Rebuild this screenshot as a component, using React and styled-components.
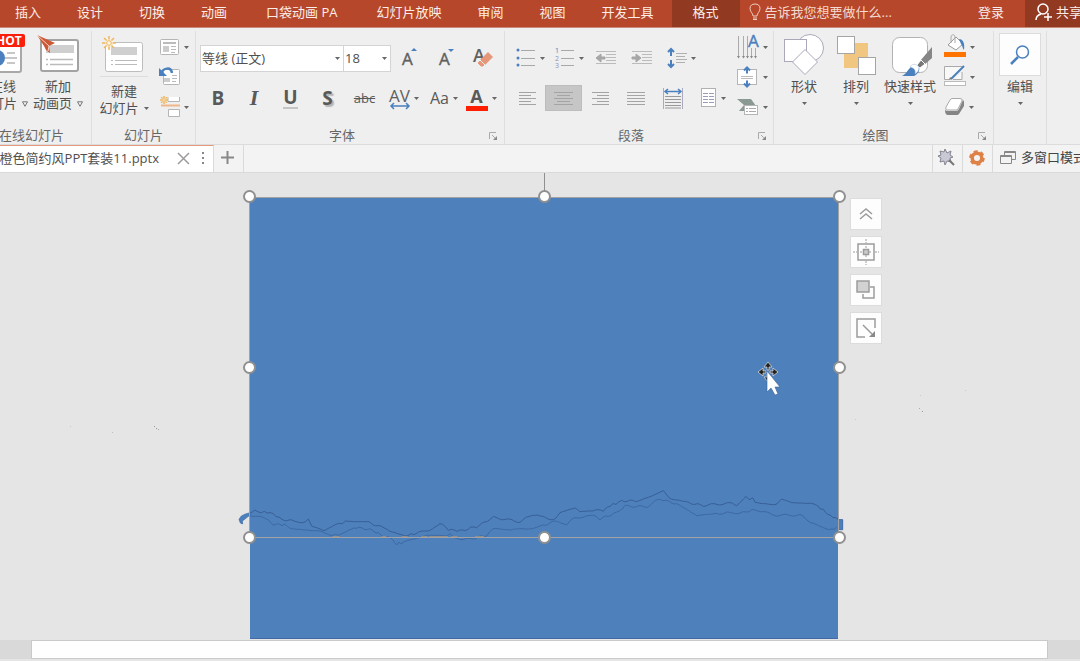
import React from 'react';
import styled, { createGlobalStyle } from 'styled-components';

const GlobalStyle = createGlobalStyle`
  * {
    box-sizing: border-box;
  }

  body {
    margin: 0;
    overflow: hidden;
    font-family: 'Open Sans', 'Noto Sans CJK SC', sans-serif;
    font-size: 13px;
    line-height: 17px;
    color: #505050;
  }

  button,
  input,
  select {
    margin: 0;
    padding: 0;
    border: 0;
    border-radius: 0;
    background: none;
    font: inherit;
    color: inherit;
  }

  svg {
    display: block;
    flex: none;
    overflow: visible;
  }
`;

const Root = styled.div`
  display: flex;
  flex-direction: column;
  height: 100vh;
  overflow: hidden;
  background: #e5e5e5;
`;

/* menu bar */

const MenuBar = styled.header`
  display: flex;
  flex: none;
  height: 28px;
  overflow: hidden;
  background: #b7472a;
  color: #fbeee9;
  border-bottom: 1px solid #c98a79;
`;

const MenuNav = styled.nav`
  display: flex;
  margin-left: -3px;
`;

const MenuItem = styled.button`
  flex: none;
  padding: 0 ${props => (props.$wide ? 21 : 18)}px 3px;
  background: ${props => (props.$active ? '#923922' : 'transparent')};
  white-space: nowrap;
`;

const TellMe = styled.label`
  display: flex;
  flex: 1;
  align-items: center;
  gap: 4px;
  padding: 0 0 3px 9px;
`;

const TellMeInput = styled.input`
  flex: 1;
  min-width: 0;
  outline: none;

  &::placeholder {
    color: #f3d9cf;
    opacity: 1;
  }
`;

const SignIn = styled.button`
  flex: none;
  padding: 0 21px 3px;
`;

const Share = styled.button`
  display: flex;
  flex: none;
  align-items: center;
  gap: 4px;
  width: 67px;
  margin-right: -12px;
  padding: 0 0 3px 10px;
  background: #923922;
  white-space: nowrap;
`;

/* ribbon */

const Ribbon = styled.div`
  display: flex;
  flex: none;
  height: 117px;
  padding-top: 3px;
  overflow: hidden;
  background: #efefef;
  border-bottom: 1px solid #dcdcdc;
`;

const Group = styled.section`
  display: flex;
  flex: none;
  flex-direction: column;
  width: ${props => props.$width}px;
  margin-left: ${props => (props.$clipped ? -28 : 0)}px;
  border-right: 1px solid #dedede;
`;

const GroupBody = styled.div`
  display: flex;
  flex: 1;
  padding: 0 4px;
`;

const GroupFooter = styled.footer`
  display: grid;
  grid-template-columns: 1fr ${props => (props.$launcher ? '16px' : '')};
  align-items: center;
  height: 18px;
  color: #666;
  text-align: center;
  white-space: nowrap;
`;

const Rows = styled.div`
  display: flex;
  flex: 1;
  flex-direction: column;
  gap: 14px;
  padding-top: 14px;
`;

const Row = styled.div`
  display: flex;
  align-items: center;
  height: 26px;
`;

const SmallColumn = styled.div`
  display: flex;
  flex: none;
  flex-direction: column;
  gap: 2px;
  padding-top: 2px;
  margin-left: ${props => props.$offset || 0}px;
`;

const ToolButton = styled.button`
  display: flex;
  flex: none;
  align-items: center;
  justify-content: ${props => (props.$start ? 'flex-start' : 'center')};
  gap: 4px;
  width: ${props => props.$width || 37}px;
  height: ${props => props.$height || 26}px;
  background: ${props => (props.$active ? '#c6c6c6' : 'transparent')};
  outline: ${props => (props.$active ? '1px solid #bdbdbd' : 'none')};
  outline-offset: -1px;
`;

const BigButton = styled.button`
  display: flex;
  flex: none;
  flex-direction: column;
  align-items: center;
  width: ${props => props.$width || 56}px;
  height: 86px;
  padding-top: 2px;
  white-space: nowrap;
`;

const BigIcon = styled.span`
  display: flex;
  align-items: center;
  justify-content: center;
  width: ${props => (props.$boxed ? '42px' : 'auto')};
  height: 43px;
  margin-bottom: 2px;
  background: ${props => (props.$boxed ? '#fdfdfd' : 'transparent')};
  border: ${props => (props.$boxed ? '1px solid #dcdcdc' : '0')};
`;

const Line = styled.span`
  display: flex;
  align-items: center;
  gap: 5px;
  height: 17px;
`;

const SplitRule = styled.span`
  width: 48px;
  height: 7px;
  border-top: 1px solid #dcdcdc;
`;

const Combo = styled.span`
  display: flex;
  align-items: center;
  width: ${props => props.$width}px;
  height: 27px;
  margin-right: -1px;
  padding-right: 3px;
  background: #fff;
  border: 1px solid #d4d4d4;
`;

const ComboSelect = styled.select`
  flex: 1;
  min-width: 0;
  padding-left: 1px;
  appearance: none;
  outline: none;
`;

const Glyph = styled.span`
  font-family: ${props => (props.$serif ? "'Liberation Serif', serif" : "'Open Sans', sans-serif")};
  font-size: ${props => props.$size || 19}px;
  font-weight: ${props => (props.$bold ? 700 : 400)};
  font-style: ${props => (props.$italic ? 'italic' : 'normal')};
  line-height: 20px;
  color: #595959;
  text-decoration: ${props => (props.$strike ? 'line-through' : 'none')};
  text-shadow: ${props => (props.$shadow ? '2px 2px 1px #b4b4b4' : 'none')};
  border-bottom: ${props => (props.$underline ? '2px solid #c4c4c4' : '0')};
`;

const Stack = styled.span`
  display: flex;
  flex-direction: column;
  align-items: center;
`;

const ColorBar = styled.span`
  width: 22px;
  height: 5px;
  background: ${props => props.$color};
`;

/* document tabs */

const TabStrip = styled.div`
  display: flex;
  flex: none;
  height: 28px;
  overflow: hidden;
  background: #f3f3f3;
  border-bottom: 1px solid #dadada;
`;

const DocTab = styled.div`
  display: flex;
  flex: none;
  align-items: center;
  justify-content: flex-end;
  gap: 13px;
  width: 214px;
  padding: 0 8px 2px 0;
  background: #fff;
  border-top: 1px solid #e59a7c;
  border-right: 1px solid #dadada;
  white-space: nowrap;
`;

const DocName = styled.span`
  margin-right: 6px;
`;

const StripButton = styled.button`
  display: flex;
  flex: none;
  align-items: center;
  justify-content: center;
  width: 30px;
  padding: 0 2px 2px 0;
  border-right: 1px solid #dadada;
`;

const StripTools = styled.div`
  display: flex;
  flex: none;
  margin-left: auto;
  border-left: 1px solid #dadada;
`;

const WindowMode = styled.button`
  display: flex;
  align-items: center;
  gap: 5px;
  width: 87px;
  padding: 0 0 2px 7px;
  color: #444;
  overflow: hidden;
  white-space: nowrap;
`;

/* canvas */

const Canvas = styled.main`
  position: relative;
  display: flex;
  flex: 1;
  justify-content: center;
  min-height: 0;
  padding: 24px 0 1px 8px;
  overflow: hidden;
`;

const Slide = styled.div`
  position: relative;
  width: 588px;
  background: #4e80bc;
  border-bottom: 1px solid #4169a6;
`;

const Selection = styled.div`
  position: absolute;
  top: 0;
  left: -1px;
  width: 590px;
  height: 341px;
  outline: 1px solid #a2a2a2;
  outline-offset: -1px;
`;

const RotateStem = styled.div`
  position: absolute;
  top: -24px;
  left: 50%;
  width: 1px;
  height: 24px;
  background: #8f8f8f;
`;

const Handle = styled.span`
  position: absolute;
  left: ${props => props.$x}%;
  top: ${props => props.$y}%;
  width: 13px;
  height: 13px;
  margin: -7px 0 0 -6px;
  background: #fff;
  border: 2px solid #909090;
  border-radius: 50%;
`;

const Overlay = styled.svg`
  position: absolute;
  left: ${props => props.$left}px;
  top: ${props => props.$top}px;
`;

const FloatBar = styled.div`
  position: absolute;
  top: 1px;
  left: 600px;
  display: flex;
  flex-direction: column;
  gap: 6px;
`;

const FloatButton = styled.button`
  display: flex;
  align-items: center;
  justify-content: center;
  width: 32px;
  height: 32px;
  background: #fdfdfd;
  outline: 1px solid #dcdcdc;
  outline-offset: -1px;
`;

const Speck = styled.span`
  position: absolute;
  left: ${props => props.$x}px;
  top: ${props => props.$y}px;
  width: 1px;
  height: 1px;
  background: ${props => props.$color || '#c9c9c9'};
`;

const ScrollTrack = styled.div`
  flex: none;
  height: 21px;
  padding: 0 32px 2px 31px;
  background: #d9d9d9;
  border-bottom: 2px solid #e5e5e5;
`;

const ScrollThumb = styled.div`
  height: 19px;
  background: #fefefe;
  border: 1px solid #c9c9c9;
`;

const BLUE = '#4a80bd';
const GRAY = '#9c9c9c';

const Caret = () => (
  <svg width="5" height="3" viewBox="0 0 5 3">
    <path d="M0 0h5L2.500 3z" fill="#666" />
  </svg>
);

const HollowCaret = () => (
  <svg width="6" height="6" viewBox="0 0 6 6">
    <path d="M.5 .8h5L3 5.300z" fill="none" stroke="#777" />
  </svg>
);

const Launcher = () => (
  <svg width="9" height="9" viewBox="0 0 9 9" fill="none" stroke="#aaa">
    <path d="M1.500 8V1.500H8M4 4l4 4" />
    <path d="M9 5v4H5z" fill="#888" stroke="none" />
  </svg>
);

const Lines = ({ widths, anchor = 'start', size = 17 }) => (
  <svg width={size} height="13" viewBox={`0 0 ${size} 13`} stroke="#a4a4a4">
    {widths.map((w, i) => {
      const x = anchor === 'start' ? 0 : anchor === 'end' ? size - w : (size - w) / 2;
      return <path key={i} d={`M${x} ${i * 3 + 0.5}h${w}`} />;
    })}
  </svg>
);

const Spark = ({ x = 7, y = 7, r = 6 }) => (
  <g stroke="#efb65e" strokeWidth="1.500" fill="none">
    {[0, 45, 90, 135, 180, 225, 270, 315].map(a => (
      <path key={a} d={`M${x} ${y - r / 2}V${y - r}`} transform={`rotate(${a} ${x} ${y})`} />
    ))}
    <circle cx={x} cy={y} r={r / 3} fill="#fdf4e2" strokeWidth="1" />
  </g>
);

const Drop = ({ label, icon, ...rest }) => (
  <ToolButton aria-label={label} {...rest}>
    {icon}
    <Caret />
  </ToolButton>
);

const RibbonGroup = ({ title, width, clipped, launcher, children }) => (
  <Group $width={width} $clipped={clipped}>
    <GroupBody>{children}</GroupBody>
    <GroupFooter $launcher={launcher}>
      <span>{title}</span>
      {launcher && <Launcher />}
    </GroupFooter>
  </Group>
);

const OnlineSlideIcon = () => (
  <svg width="40" height="38" viewBox="0 0 40 38">
    <rect x="1" y="4" width="37" height="32" rx="2" fill="#fff" stroke="#a8a8a8" strokeWidth="2" />
    <circle cx="14" cy="22" r="8" fill={BLUE} />
    <path d="M24 17h8M22 22h12M24 27h8" stroke="#b5b5b5" strokeWidth="1.500" />
    <rect x="10" y="-2" width="32" height="13" rx="2" fill="#f91f0b" />
    <text x="13" y="9" fontSize="12" fontWeight="700" fill="#fff">HOT</text>
  </svg>
);

const AnimatedPageIcon = () => (
  <svg width="38" height="38" viewBox="0 0 38 38">
    <rect x="2" y="4" width="37" height="31" rx="2" fill="#fff" stroke="#a3a3a3" strokeWidth="2" />
    <rect x="7" y="9" width="28" height="8" fill="#cfcfcf" />
    <path d="M7 23.500h2M11 23.500h23M7 28.500h2M11 28.500h23" stroke="#bbb" strokeWidth="1.500" />
    <path d="M-2-1l18 8-6 3 1 7-4-3-2-4z" fill="#cc5836" />
    <path d="M-2-1l12 11-1 5" stroke="#f4d6ca" fill="none" />
  </svg>
);

const NewSlideIcon = () => (
  <svg width="42" height="38" viewBox="0 0 42 38">
    <rect x="2.500" y="7.500" width="37" height="29" rx="2" fill="#fff" stroke="#bdbdbd" />
    <rect x="8" y="12" width="26" height="8" fill="#cfcfcf" />
    <path d="M8 25.500h2M12 25.500h22M8 29.500h2M12 29.500h22" stroke="#bbb" />
    <circle cx="6" cy="8" r="5" fill="#f6f1e6" />
    <Spark x={6} y={8} r={7} />
  </svg>
);

const LayoutIcon = () => (
  <svg width="20" height="18" viewBox="0 0 20 18">
    <rect x=".5" y="1.500" width="18" height="15" rx="1" fill="#fff" stroke="#b5b5b5" />
    <path d="M3 5h13" stroke="#bbb" strokeWidth="2" />
    <rect x="3" y="8" width="6" height="6" fill="#ccc" />
    <path d="M11 8.500h5M11 11.500h5M11 14.500h4" stroke="#bbb" />
  </svg>
);

const ResetIcon = () => (
  <svg width="20" height="18" viewBox="0 0 20 18">
    <rect x="3.500" y="1.500" width="16" height="15" rx="1" fill="#fff" stroke="#b5b5b5" />
    <rect x="4" y="10" width="6" height="4" fill="#ccc" />
    <path d="M12 7.500h5M12 10.500h5M12 13.500h4" stroke="#bbb" />
    <path d="M0 6c4-7 11-7 12-1" stroke={BLUE} strokeWidth="2.500" fill="none" />
    <path d="M-1 0v8h8z" fill={BLUE} />
  </svg>
);

const SectionIcon = () => (
  <svg width="20" height="20" viewBox="0 0 20 20">
    <path d="M8 0v4.500h11.500V0M8.500 12.500v7h11v-7z" fill="#fff" stroke="#b5b5b5" />
    <path d="M1 8.500h19" stroke="#efb68a" strokeWidth="2" />
    <Spark x={4} y={3} r={4} />
  </svg>
);

const Sized = ({ up }) => (
  <svg width="14" height="22" viewBox="0 0 14 22">
    <text x="0" y="18" fontSize="17" fill="#606060" stroke="#606060" strokeWidth=".4">A</text>
    <path d={up ? 'M9 4l3-3 3 3z' : 'M9 2l3 3 3-3z'} fill={BLUE} />
  </svg>
);

const ClearFormat = () => (
  <svg width="20" height="24" viewBox="0 0 20 24">
    <text x="0" y="16" fontSize="18" fontWeight="600" fill="#606060">A</text>
    <path d="M7 14l8-8 5 5-8 8z" fill="#e6977a" />
    <path d="M4 17l3-3 5 5-2 2H8z" fill="#e6977a" stroke="#efefef" />
  </svg>
);

const SpacingIcon = () => (
  <svg width="20" height="22" viewBox="0 0 20 22">
    <text x="-1" y="15" fontSize="17" fill="#606060">AV</text>
    <path d="M1 19h18M4 16l-3 3 3 3M16 16l3 3-3 3" stroke={BLUE} strokeWidth="1.500" fill="none" />
  </svg>
);

const BulletIcon = () => (
  <svg width="20" height="20" viewBox="0 0 20 20">
    {[2, 10, 17].map(y => (
      <g key={y}>
        <circle cx="2" cy={y} r="1.500" fill={BLUE} />
        <path d={`M5 ${y + 0.5}h14`} stroke="#a8a8a8" />
      </g>
    ))}
  </svg>
);

const NumberIcon = () => (
  <svg width="20" height="20" viewBox="0 0 20 20">
    {[2, 10, 17].map((y, i) => (
      <g key={y}>
        <text x="0" y={y + 3} fontSize="7" fill={i ? '#8f93bd' : BLUE}>{i + 1}</text>
        <path d={`M6 ${y + 0.5}h13`} stroke="#a8a8a8" />
      </g>
    ))}
  </svg>
);

const IndentIcon = ({ out }) => (
  <svg width="20" height="14" viewBox="0 0 20 14">
    <path d="M0 .5h20M10 3.500h10M10 6.500h10M10 9.500h10M0 12.500h20" stroke="#bbb" />
    <path d={out ? 'M0 7l5-4v3h4v2H5v3z' : 'M9 7L4 3v3H0v2h4v3z'} fill="#a6a6a6" stroke="#a6a6a6" />
  </svg>
);

const LineSpacingIcon = () => (
  <svg width="20" height="20" viewBox="0 0 20 20">
    <path d="M4 1v7M4 12v7M1 4l3-3 3 3M1 16l3 3 3-3" stroke={BLUE} strokeWidth="2" fill="none" />
    <path d="M9 5.500h11M9 8.500h9M9 11.500h11M9 14.500h9" stroke="#b0b0b0" />
  </svg>
);

const DistributeIcon = () => (
  <svg width="20" height="21" viewBox="0 0 20 21">
    <path d="M.5 0v21M19.500 0v21" stroke="#a9a9c0" />
    <path d="M2 3.500h16M5 1L2 3.500 5 6M15 1l3 2.500L15 6" stroke={BLUE} strokeWidth="1.500" fill="none" />
    <path d="M2 8.500h16M2 11.500h16M2 14.500h16M2 17.500h16M2 20h16" stroke="#999" />
  </svg>
);

const ColumnsIcon = () => (
  <svg width="16" height="20" viewBox="0 0 16 20">
    <rect x=".5" y=".5" width="14" height="18" fill="#fff" stroke="#b0b0b0" />
    <path d="M2 5.500h5M8 5.500h5M2 8.500h5M8 8.500h5M2 11.500h5M8 11.500h5M2 14.500h5M8 14.500h5" stroke="#9a9db8" />
  </svg>
);

const TextDirectionIcon = () => (
  <svg width="22" height="24" viewBox="0 0 22 24">
    <path d="M1.500 1v20M6.500 1v20M10.500 1v20M14.500 13v8M18.500 13v8" stroke="#aaa" />
    <path d="M0 21h3l-1.500 2.500zM5 21h3l-1.500 2.500zM9 21h3l-1.500 2.500zM13 21h3l-1.500 2.500zM17 21h3l-1.500 2.500z" fill="#888" />
    <text x="11" y="12" fontSize="17" fill={BLUE} stroke={BLUE} strokeWidth=".4">A</text>
  </svg>
);

const AlignTextIcon = () => (
  <svg width="22" height="22" viewBox="0 0 22 22">
    <rect x=".5" y="3.500" width="19" height="15" fill="#fff" stroke="#b5b5b5" />
    <path d="M4 10.500h12M4 12.500h12" stroke="#bbb" />
    <path d="M10 1.500v6M10 14.500v6M7 4.500l3-3 3 3M7 17.500l3 3 3-3" stroke={BLUE} strokeWidth="2" fill="none" />
  </svg>
);

const SmartArtIcon = () => (
  <svg width="22" height="18" viewBox="0 0 22 18">
    <path d="M0 1h14l5 7-5 5H2l5-6z" fill="#8a9a92" />
    <rect x="7.500" y="7.500" width="13" height="9" fill="#fff" stroke="#b5b5b5" />
    <path d="M9 10.500h2M12 10.500h7M9 13.500h2M12 13.500h7" stroke="#aaa" />
  </svg>
);

const ShapesIcon = () => (
  <svg width="40" height="41" viewBox="0 0 40 41" fill="#fff" stroke="#a9a9bb">
    <circle cx="26" cy="14" r="13.500" />
    <rect x=".5" y="5.500" width="22" height="22" />
    <path d="M21 15.500L33.500 28 21 40.500 8.500 28z" />
  </svg>
);

const ArrangeIcon = () => (
  <svg width="39" height="40" viewBox="0 0 39 40">
    <path d="M15 8h16v14H22v11H7V19h8z" fill="#f0c680" />
    <rect x=".5" y="1.500" width="17" height="17" fill="#fff" stroke="#a5a5a5" />
    <rect x="21.500" y="22.500" width="17" height="17" fill="#fff" stroke="#a5a5a5" />
  </svg>
);

const QuickStyleIcon = () => (
  <svg width="36" height="42" viewBox="0 0 36 42">
    <rect x=".5" y="3.500" width="35" height="35" rx="7" fill="#fff" stroke="#b2b2b2" />
    <path d="M40 13v11l-8 7-4-4z" fill="#868686" />
    <path d="M29 26l4 4-5 4-3-3z" fill="#777" stroke="#fff" />
    <path d="M18 34c2-4 6-4 9-1 1 4-1 7-5 9H10c4-2 5-5 8-8z" fill={BLUE} />
    <path d="M18 33c3-5 9-2 9 1 0 2-2 5-4 6 1-4-1-6-5-7z" fill="#fff" stroke="#9fb9d9" strokeWidth=".5" />
  </svg>
);

const FillIcon = () => (
  <svg width="22" height="22" viewBox="0 0 22 22">
    <path d="M4 9l8-8 7 7-7 6z" fill="#fff" stroke="#999" />
    <path d="M7 7V1c0-3 4-3 4 0v6" fill="none" stroke="#aaa" />
    <path d="M15 3c4 0 6 4 5 11-2-2-1-4-3-6z" fill={BLUE} />
    <rect x="0" y="16" width="22" height="5" fill="#ff7300" />
  </svg>
);

const OutlineIcon = () => (
  <svg width="22" height="22" viewBox="0 0 22 22">
    <path d="M20 .5H.5v13H5M9 13.500h9V6" fill="#f8f8f8" stroke="#aaa" />
    <path d="M7 13L20 0" stroke={BLUE} strokeWidth="2" />
    <path d="M5 14l1-3 2 2z" fill="#777" />
    <rect x=".5" y="15.500" width="21" height="4" fill="#fff" stroke="#bbb" />
  </svg>
);

const EffectsIcon = () => (
  <svg width="20" height="18" viewBox="0 0 20 18">
    <path d="M7 .5h8q3 0 2 2.500l-4 8q-1 1-2 1H2q-2 0-1-3l4-7q1-1.500 2-1.500z" fill="#fff" stroke="#aaa" />
    <path d="M18 2q1 1 1 2v4l-5 8q-1 1-2 1H3q-3 0-3-5 1 1 3 1h8q2 0 3-2z" fill="#858585" />
  </svg>
);

const SearchIcon = () => (
  <svg width="20" height="20" viewBox="0 0 20 20" fill="none" stroke={BLUE}>
    <circle cx="12.500" cy="7" r="6" strokeWidth="1.500" />
    <path d="M8 12l-7 7" strokeWidth="2.500" />
  </svg>
);

// Ridge lines of the picture behind the slide, in thirds of a pixel.
const RIDGE = [
  [60, 97], [75, 87], [85, 96], [120, 97], [155, 118], [180, 122], [210, 131], [235, 118],
  [245, 135], [282, 149], [320, 133], [355, 123], [400, 122], [450, 140], [480, 156], [525, 167],
  [560, 160], [600, 148], [630, 130], [655, 148], [690, 153], [740, 140], [790, 112], [870, 125],
  [910, 103], [930, 110], [970, 118], [990, 100], [1035, 83], [1050, 93], [1080, 90], [1120, 93],
  [1140, 78], [1175, 63], [1225, 62], [1270, 48], [1300, 35], [1325, 58], [1370, 68], [1420, 76],
  [1500, 70], [1520, 74], [1548, 52], [1560, 58], [1568, 50], [1575, 65], [1635, 72], [1655, 60],
  [1685, 70], [1745, 68], [1780, 90], [1800, 105], [1825, 118],
];

const FOOTHILL = [
  [60, 105], [115, 118], [130, 133], [165, 134], [185, 145], [230, 147], [300, 163], [325, 167],
  [370, 142], [420, 148], [455, 165], [480, 175], [500, 192], [507, 183], [512, 193], [530, 180],
  [560, 175], [590, 168], [650, 170], [660, 162], [680, 175], [720, 178], [770, 165], [795, 143],
  [840, 147], [860, 150], [930, 140], [980, 122], [1010, 132], [1035, 112], [1090, 108],
  [1110, 117], [1160, 98], [1185, 78], [1250, 80], [1290, 57], [1340, 72], [1400, 110],
  [1460, 100], [1540, 98], [1575, 88], [1630, 105], [1710, 106], [1750, 130], [1795, 152],
  [1820, 142],
];

const roughen = points =>
  points
    .flatMap(([x, y], i) => {
      const next = points[i + 1];
      if (!next) return [[x, y]];
      const steps = Math.max(1, Math.round((next[0] - x) / 8));
      return Array.from({ length: steps }, (_, k) => {
        const t = k / steps;
        const px = x + (next[0] - x) * t;
        return [Math.round(px), Math.round(y + (next[1] - y) * t + Math.sin(px * 1.7) * 3)];
      });
    })
    .join(' ');

const Mountains = () => (
  <Overlay $left={-20} $top={283} width="630" height="75" viewBox="0 0 1890 225" fill="none">
    <path
      d="M60 98l-14 4-12 6-7 10 4 11 7 3-1-9 8-6 10-8 5-1z"
      fill={BLUE}
      stroke="#3f6ba4"
      strokeWidth="2"
    />
    <path d="M1826 119h12v30h-12" fill={BLUE} stroke="#3f6ba4" strokeWidth="3" />
    <polyline points={roughen(RIDGE)} stroke="#385f94" strokeWidth="3" />
    <polyline points={roughen(FOOTHILL)} stroke="#3d69a3" strokeWidth="3" />
    <path
      d="M308 170h20M455 170h14M515 170h18M573 170h20M598 170h56M664 170h18M735 170h27"
      stroke="#a09383"
      strokeWidth="3"
    />
  </Overlay>
);

const MoveCursor = () => (
  <Overlay $left={508} $top={165} width="22" height="34" viewBox="0 0 22 34">
    <g fill="#222" stroke="#d8d8d8" strokeWidth=".8">
      <path d="M10 0l4 5h-3v3H9V5H6zM0 10l5-4v3h3v2H5v3zM20 10l-5-4v3h-3v2h3v3zM10 20l4-5h-3v-3H9v3H6z" />
    </g>
    <path d="M9 9v21l4-4 4 7 3-1-3-7h5z" fill="#fff" stroke="#3a6195" strokeWidth=".6" />
  </Overlay>
);

const MENU = ['插入', '设计', '切换', '动画', '口袋动画 PA', '幻灯片放映', '审阅', '视图', '开发工具', '格式'];

const WIDE_MENU = ['口袋动画 PA', '格式'];

const HANDLES = [[0, 0], [50, 0], [100, 0], [0, 50], [100, 50], [0, 100], [50, 100], [100, 100]];

const SPECKS = [
  [70, 253], [112, 259, '#bdbdbd'], [154, 253, '#999'], [156, 255, '#999'], [158, 256, '#aaa'],
  [855, 246], [920, 222], [919, 235, '#aaa'], [922, 238, '#999'], [965, 217],
];

const App = () => (
  <Root>
    <GlobalStyle />
    <MenuBar>
      <MenuNav>
        {MENU.map(name => (
          <MenuItem key={name} $active={name === '格式'} $wide={WIDE_MENU.includes(name)}>
            {name}
          </MenuItem>
        ))}
      </MenuNav>
      <TellMe>
        <svg width="12" height="18" viewBox="0 0 12 18" fill="none" stroke="#f0cdbf">
          <path d="M4 13c0-3-3-4-3-7.500C1 2.500 3 1 6 1s5 1.500 5 4.500C11 9 8 10 8 13z" />
          <path d="M4 15h4M4 16.500h4" />
        </svg>
        <TellMeInput aria-label="告诉我您想要做什么" placeholder="告诉我您想要做什么..." />
      </TellMe>
      <SignIn>登录</SignIn>
      <Share>
        <svg width="17" height="18" viewBox="0 0 17 18" fill="none" stroke="#fff" strokeWidth="1.500">
          <circle cx="8" cy="6" r="5" />
          <path d="M1 17c0-3 2-5 5-6M13 10v8M9 14h8" />
        </svg>
        共享
      </Share>
    </MenuBar>

    <Ribbon>
      <RibbonGroup title="在线幻灯片" width={120} clipped>
        <BigButton $width={54}>
          <BigIcon><OnlineSlideIcon /></BigIcon>
          <Line>在线</Line>
          <Line>幻灯片 <HollowCaret /></Line>
        </BigButton>
        <BigButton>
          <BigIcon><AnimatedPageIcon /></BigIcon>
          <Line>新加</Line>
          <Line>动画页 <HollowCaret /></Line>
        </BigButton>
      </RibbonGroup>

      <RibbonGroup title="幻灯片" width={104}>
        <BigButton>
          <BigIcon><NewSlideIcon /></BigIcon>
          <SplitRule />
          <Line>新建</Line>
          <Line>幻灯片 <Caret /></Line>
        </BigButton>
        <SmallColumn $offset={8}>
          <Drop label="版式" icon={<LayoutIcon />} $width={32} $height={28} $start />
          <ToolButton aria-label="重置" $width={32} $height={28} $start><ResetIcon /></ToolButton>
          <Drop label="节" icon={<SectionIcon />} $width={32} $height={28} $start />
        </SmallColumn>
      </RibbonGroup>

      <RibbonGroup title="字体" width={309} launcher>
        <Rows>
          <Row>
            <Combo $width={144}>
              <ComboSelect aria-label="字体"><option>等线 (正文)</option></ComboSelect>
              <Caret />
            </Combo>
            <Combo $width={48}>
              <ComboSelect aria-label="字号"><option>18</option></ComboSelect>
              <Caret />
            </Combo>
            <ToolButton aria-label="增大字号"><Sized up /></ToolButton>
            <ToolButton aria-label="减小字号"><Sized /></ToolButton>
            <ToolButton aria-label="清除格式"><ClearFormat /></ToolButton>
          </Row>
          <Row>
            <ToolButton $width={36}><Glyph $bold>B</Glyph></ToolButton>
            <ToolButton $width={36}><Glyph $bold $italic $serif $size={22}>I</Glyph></ToolButton>
            <ToolButton><Glyph $bold $underline>U</Glyph></ToolButton>
            <ToolButton><Glyph $bold $shadow>S</Glyph></ToolButton>
            <ToolButton><Glyph $size={13} $strike>abc</Glyph></ToolButton>
            <Drop label="字符间距" icon={<SpacingIcon />} $width={42} />
            <Drop label="更改大小写" icon={<Glyph $size={16}>Aa</Glyph>} $width={38} />
            <Drop
              label="字体颜色"
              $width={36}
              icon={<Stack><Glyph $bold $size={18}>A</Glyph><ColorBar $color="#ff1e00" /></Stack>}
            />
          </Row>
        </Rows>
      </RibbonGroup>

      <RibbonGroup title="段落" width={269} launcher>
        <Rows>
          <Row>
            <Drop label="项目符号" icon={<BulletIcon />} $width={42} />
            <Drop label="编号" icon={<NumberIcon />} />
            <ToolButton aria-label="降低列表级别" $width={36}><IndentIcon out /></ToolButton>
            <ToolButton aria-label="提高列表级别" $width={36}><IndentIcon /></ToolButton>
            <Drop label="行距" icon={<LineSpacingIcon />} $width={42} />
          </Row>
          <Row>
            <ToolButton aria-label="左对齐" $width={36}><Lines widths={[17, 12, 17, 12, 17]} /></ToolButton>
            <ToolButton aria-label="居中" $active>
              <Lines widths={[19, 13, 19, 13, 19]} size={19} anchor="middle" />
            </ToolButton>
            <ToolButton aria-label="右对齐" $width={36}>
              <Lines widths={[17, 12, 17, 12, 17]} anchor="end" />
            </ToolButton>
            <ToolButton aria-label="两端对齐" $width={36}><Lines widths={[18, 18, 18, 18, 18]} size={18} /></ToolButton>
            <ToolButton aria-label="分散对齐"><DistributeIcon /></ToolButton>
            <Drop label="分栏" icon={<ColumnsIcon />} $width={44} />
          </Row>
        </Rows>
        <SmallColumn>
          <Drop label="文字方向" icon={<TextDirectionIcon />} $width={32} $height={28} $start />
          <Drop label="对齐文本" icon={<AlignTextIcon />} $width={32} $height={28} $start />
          <Drop label="转换为 SmartArt" icon={<SmartArtIcon />} $width={32} $height={28} $start />
        </SmallColumn>
      </RibbonGroup>

      <RibbonGroup title="绘图" width={220} launcher>
        <BigButton $width={52}>
          <BigIcon><ShapesIcon /></BigIcon>
          <Line>形状</Line>
          <Line><Caret /></Line>
        </BigButton>
        <BigButton $width={52}>
          <BigIcon><ArrangeIcon /></BigIcon>
          <Line>排列</Line>
          <Line><Caret /></Line>
        </BigButton>
        <BigButton>
          <BigIcon><QuickStyleIcon /></BigIcon>
          <Line>快速样式</Line>
          <Line><Caret /></Line>
        </BigButton>
        <SmallColumn $offset={2}>
          <Drop label="形状填充" icon={<FillIcon />} $width={38} $height={28} />
          <Drop label="形状轮廓" icon={<OutlineIcon />} $width={38} $height={28} />
          <Drop label="形状效果" icon={<EffectsIcon />} $width={38} $height={28} />
        </SmallColumn>
      </RibbonGroup>

      <RibbonGroup title="" width={53}>
        <BigButton $width={44}>
          <BigIcon $boxed><SearchIcon /></BigIcon>
          <Line>编辑</Line>
          <Line><Caret /></Line>
        </BigButton>
      </RibbonGroup>
    </Ribbon>

    <TabStrip>
      <DocTab>
        <DocName>橙色简约风PPT套装11.pptx</DocName>
        <button aria-label="关闭">
          <svg width="11" height="11" viewBox="0 0 11 11" stroke={GRAY} strokeWidth="1.500">
            <path d="M0 0l11 11M11 0L0 11" />
          </svg>
        </button>
        <button aria-label="更多">
          <svg width="3" height="12" viewBox="0 0 3 12" fill="#888">
            <path d="M0 0h2v2H0zM0 5h2v2H0zM0 10h2v2H0z" />
          </svg>
        </button>
      </DocTab>
      <StripButton aria-label="新建标签">
        <svg width="13" height="13" viewBox="0 0 13 13" stroke="#888" strokeWidth="2">
          <path d="M6.500 0v13M0 6.500h13" />
        </svg>
      </StripButton>
      <StripTools>
        <StripButton aria-label="美化">
          <svg width="17" height="17" viewBox="0 0 17 17">
            <path
              d="M7 0l2 4 4-2-1 4 3 2-3 1 1 4-4-1-2 4-1-4-4 1 1-4-3-2 3-1-1-4 4 1z"
              fill="#c9c9d6"
              stroke="#85858f"
            />
            <path d="M11 11l5 5" stroke="#777" strokeWidth="2" />
          </svg>
        </StripButton>
        <StripButton aria-label="设置">
          <svg width="16" height="16" viewBox="0 0 16 16" fill="none" stroke="#de8147">
            <circle cx="8" cy="8" r="4.800" strokeWidth="3.500" />
            <circle cx="8" cy="8" r="6.800" strokeWidth="2" strokeDasharray="4 3.120" />
          </svg>
        </StripButton>
        <WindowMode>
          <svg width="16" height="13" viewBox="0 0 16 13" fill="#f3f3f3" stroke="#888">
            <path d="M4.500.5h11v8h-11zM4.500 1.500h11" />
            <path d="M.5 4.500h11v8H.5zM.5 5.500h11" />
          </svg>
          多窗口模式
        </WindowMode>
      </StripTools>
    </TabStrip>

    <Canvas>
      {SPECKS.map(([x, y, color]) => (
        <Speck key={`${x}-${y}`} $x={x} $y={y} $color={color} />
      ))}
      <Slide>
        <Mountains />
        <Selection>
          <RotateStem />
          {HANDLES.map(([x, y]) => (
            <Handle key={`${x}-${y}`} $x={x} $y={y} />
          ))}
        </Selection>
        <FloatBar>
          <FloatButton aria-label="收起">
            <svg width="14" height="12" viewBox="0 0 14 12" fill="none" stroke={GRAY} strokeWidth="1.500">
              <path d="M1 6l6-5 6 5M1 11l6-5 6 5" />
            </svg>
          </FloatButton>
          <FloatButton aria-label="对齐">
            <svg width="26" height="26" viewBox="0 0 26 26" fill="none" stroke={GRAY}>
              <rect x="5" y="5" width="16" height="16" strokeWidth="1.500" />
              <rect x="10.500" y="10.500" width="5" height="5" fill="#ccc" strokeWidth="1.500" />
              <path d="M13 0v4M13 22v4M0 13h4M22 13h4M13 7v3M13 16v3M7 13h3M16 13h3" strokeDasharray="2 1" />
            </svg>
          </FloatButton>
          <FloatButton aria-label="层次">
            <svg width="20" height="20" viewBox="0 0 20 20" fill="none" stroke={GRAY}>
              <path d="M14 7h4v11H7v-4" strokeWidth="1.500" />
              <rect x="1" y="1" width="12" height="11" fill="#d2d2d2" strokeWidth="1.500" />
            </svg>
          </FloatButton>
          <FloatButton aria-label="尺寸">
            <svg width="20" height="20" viewBox="0 0 20 20" fill="none" stroke={GRAY} strokeWidth="1.500">
              <path d="M9 19H1V1h18v9M7 7l9 9" />
              <path d="M19 13v6h-6z" fill="#888" stroke="none" />
            </svg>
          </FloatButton>
        </FloatBar>
        <MoveCursor />
      </Slide>
    </Canvas>

    <ScrollTrack>
      <ScrollThumb />
    </ScrollTrack>
  </Root>
);

export default App;
